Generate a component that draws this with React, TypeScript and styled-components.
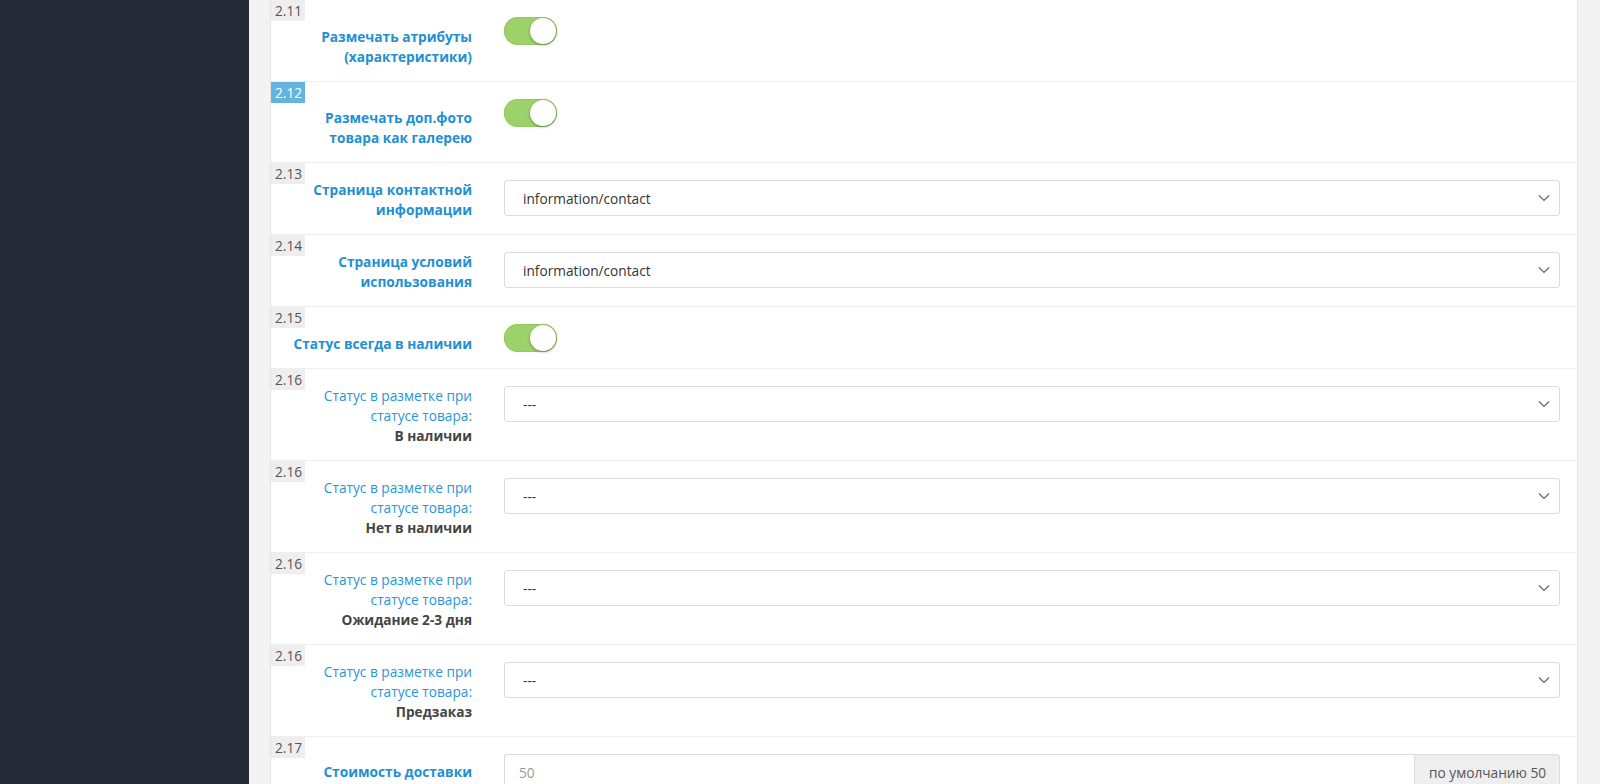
import React from "react";
import styled, { createGlobalStyle } from "styled-components";

const Global = createGlobalStyle`
  html, body { margin: 0; padding: 0; overflow: hidden; }
  body { font-family: "Open Sans", "Noto Sans", sans-serif; font-size: 13.7px; color: #333; background: #f3f3f3; }
  * { box-sizing: border-box; }
`;

const Layout = styled.div`
  display: flex;
  min-height: 100vh;
`;

const Sidebar = styled.aside`
  width: 249px;
  flex: 0 0 249px;
  background: #242b36;
`;

const Main = styled.main`
  flex: 1;
  background: #f3f3f3;
  padding: 0 22px 0 21px;
`;

const Panel = styled.section`
  background: #fff;
  border-left: 1px solid #e6e6e6;
  border-right: 1px solid #e6e6e6;
  min-height: 100vh;
`;

const Row = styled.div`
  position: relative;
  display: grid;
  grid-template-columns: 201px 1fr;
  column-gap: 32px;
  padding: 17px 17px 14px 0;
  border-bottom: 1px solid #efefef;
`;

const Badge = styled.span<{ $active?: boolean }>`
  position: absolute;
  top: 0;
  left: 0;
  width: 34px;
  height: 21px;
  padding-left: 4px;
  font-size: 13.7px;
  line-height: 21px;
  color: ${(p) => (p.$active ? "#fff" : "#555")};
  background: ${(p) => (p.$active ? "#63b3df" : "#eeeeee")};
`;

const Label = styled.label<{ $pt: number }>`
  display: block;
  padding-top: ${(p) => p.$pt}px;
  text-align: right;
  line-height: 20px;
  font-size: 13.7px;
  font-weight: 700;
  color: #2190d3;
  white-space: nowrap;
`;

const LabelNote = styled.span`
  display: block;
  font-weight: 400;
  color: #2a95d8;
`;

const LabelStrong = styled.span`
  display: block;
  font-weight: 700;
  color: #444;
`;

const Control = styled.div`
  min-width: 0;
`;

const Track = styled.div`
  position: relative;
  width: 53px;
  height: 28px;
  border-radius: 14px;
  background: #9dd26a;
  box-shadow: inset 0 0 0 1px #93c960;
`;

const Knob = styled.span`
  position: absolute;
  top: 1px;
  right: 1px;
  width: 26px;
  height: 26px;
  border-radius: 50%;
  background: #fff;
  box-shadow: 0 1px 3px rgba(0, 0, 0, 0.35);
`;

const SelectBox = styled.div`
  position: relative;
  height: 36px;
  border: 1px solid #dcdcdc;
  border-radius: 3px;
  background: #fff;
  padding: 0 40px 0 18px;
  display: flex;
  align-items: center;
  font-size: 13.7px;
  color: #333;
`;

const Chevron = styled.svg`
  position: absolute;
  right: 3px;
  top: 50%;
  transform: translateY(-50%);
  width: 24px;
  height: 12px;
`;

const InputGroup = styled.div`
  display: flex;
  height: 36px;
`;

const TextInput = styled.div`
  flex: 1;
  border: 1px solid #dcdcdc;
  border-right: none;
  border-radius: 3px 0 0 3px;
  padding: 0 14px;
  display: flex;
  align-items: center;
  color: #999;
  font-size: 13.7px;
`;

const Addon = styled.div`
  width: 146px;
  border: 1px solid #dcdcdc;
  border-radius: 0 3px 3px 0;
  background: #eeeeee;
  display: flex;
  align-items: center;
  padding-left: 14px;
  color: #555;
  font-size: 13.7px;
  white-space: nowrap;
`;

const Toggle = () => (
  <Track>
    <Knob />
  </Track>
);

const Select = ({ value }: { value: string }) => (
  <SelectBox>
    {value}
    <Chevron viewBox="0 0 24 12">
      <polyline points="7,3.5 12,8.5 17,3.5" fill="none" stroke="#666" strokeWidth="1.2" />
    </Chevron>
  </SelectBox>
);

type Item = {
  num: string;
  active?: boolean;
  pt: number;
  label: React.ReactNode;
  control: React.ReactNode;
};

const statusLabel = (s: string) => (
  <>
    <LabelNote>Статус в разметке при<br />статусе товара:</LabelNote>
    <LabelStrong>{s}</LabelStrong>
  </>
);

const items: Item[] = [
  { num: "2.11", pt: 10, label: <>Размечать атрибуты<br />(характеристики)</>, control: <Toggle /> },
  { num: "2.12", active: true, pt: 9, label: <>Размечать доп.фото<br />товара как галерею</>, control: <Toggle /> },
  { num: "2.13", pt: 0, label: <>Страница контактной<br />информации</>, control: <Select value="information/contact" /> },
  { num: "2.14", pt: 0, label: <>Страница условий<br />использования</>, control: <Select value="information/contact" /> },
  { num: "2.15", pt: 10, label: <>Статус всегда в наличии</>, control: <Toggle /> },
  { num: "2.16", pt: 0, label: statusLabel("В наличии"), control: <Select value="---" /> },
  { num: "2.16", pt: 0, label: statusLabel("Нет в наличии"), control: <Select value="---" /> },
  { num: "2.16", pt: 0, label: statusLabel("Ожидание 2-3 дня"), control: <Select value="---" /> },
  { num: "2.16", pt: 0, label: statusLabel("Предзаказ"), control: <Select value="---" /> },
  {
    num: "2.17",
    pt: 8,
    label: <>Стоимость доставки</>,
    control: (
      <InputGroup>
        <TextInput>50</TextInput>
        <Addon>по умолчанию 50</Addon>
      </InputGroup>
    ),
  },
];

export default function App() {
  return (
    <>
      <Global />
      <Layout>
        <Sidebar />
        <Main>
          <Panel>
            {items.map((it, i) => (
              <Row key={i}>
                <Badge $active={it.active}>{it.num}</Badge>
                <Label $pt={it.pt}>{it.label}</Label>
                <Control>{it.control}</Control>
              </Row>
            ))}
          </Panel>
        </Main>
      </Layout>
    </>
  );
}
